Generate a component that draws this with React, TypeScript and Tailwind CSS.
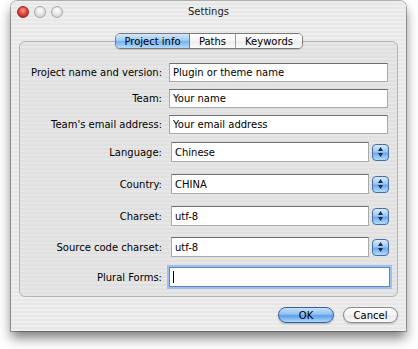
const pinstripe =
  "bg-[repeating-linear-gradient(180deg,#eeeeee_0px,#eeeeee_2px,#e7e7e7_2px,#e7e7e7_4px)]";

function Light({ red }: { red?: boolean }) {
  return (
    <div
      className={
        red
          ? "w-[12px] h-[12px] rounded-full border border-[#8a2a2a] bg-[radial-gradient(circle_at_50%_35%,#ff9a8a_0%,#e4483a_45%,#a81c14_100%)]"
          : "w-[12px] h-[12px] rounded-full border border-[#a8a8a8] bg-[radial-gradient(circle_at_50%_35%,#ffffff_0%,#e6e6e6_50%,#c4c4c4_100%)]"
      }
    />
  );
}

function Row({
  label,
  className,
  children,
}: {
  label: string;
  className: string;
  children: React.ReactNode;
}) {
  return (
    <div className={"grid grid-cols-[142px_1fr] gap-x-[7px] items-center " + className}>
      <div className="text-right whitespace-nowrap">{label}</div>
      {children}
    </div>
  );
}

function TextField({ value }: { value: string }) {
  return (
    <div className="h-[19px] bg-white border border-[#a9a9a9] border-t-[#6e6e6e] pl-[3px] flex items-center whitespace-nowrap">
      {value}
    </div>
  );
}

function Combo({ value }: { value: string }) {
  return (
    <div className="flex items-center pl-[2px]">
      <div className="w-[198px] h-[20px] bg-white border border-[#a9a9a9] border-t-[#6e6e6e] pl-[3px] flex items-center">
        {value}
      </div>
      <div className="ml-[3px] w-[17px] h-[17px] rounded-[4px] border border-[#4b6d9e] bg-[linear-gradient(180deg,#d9eafc_0%,#9cc8f3_45%,#6aa8ea_55%,#b5dafc_100%)] flex flex-col items-center justify-center gap-[2px]">
        <svg width="5" height="4" viewBox="0 0 5 4">
          <path d="M2.5 0 L5 4 L0 4 Z" fill="#1d2c44" />
        </svg>
        <svg width="5" height="4" viewBox="0 0 5 4">
          <path d="M0 0 L5 0 L2.5 4 Z" fill="#1d2c44" />
        </svg>
      </div>
    </div>
  );
}

export default function App() {
  return (
    <div className="w-[418px] h-[349px] bg-white pl-[11px] pt-[1px] font-['DejaVu_Sans',sans-serif] text-[10px] text-black">
      <div
        className={
          "w-[395px] h-[330px] rounded-t-[6px] flex flex-col shadow-[0_0_0_1px_rgba(0,0,0,0.28),0_7px_12px_rgba(0,0,0,0.5)] " +
          pinstripe
        }
      >
        {/* Title bar */}
        <div className="h-[21px] relative flex items-center pl-[6px]">
          <div className="flex gap-[5px]">
            <Light red />
            <Light />
            <Light />
          </div>
          <div className="absolute inset-0 flex items-center justify-center text-[#222]">
            Settings
          </div>
        </div>

        <div className="flex-1 px-[8px] pt-[11px] flex flex-col">
          {/* Tabs */}
          <div className="relative z-10 flex justify-center pl-[1px]">
            <div className="flex h-[16px] rounded-[5px] border border-[#7b7b7b] overflow-hidden text-[10px] shadow-[0_1px_1px_rgba(0,0,0,0.15)]">
              <div className="w-[74px] flex items-center justify-center bg-[linear-gradient(180deg,#d3e6fb_0%,#a3cbf4_45%,#79b2ee_55%,#b7dcfd_100%)] border-r border-[#6c7f9a]">
                Project info
              </div>
              <div className="w-[46px] flex items-center justify-center bg-[linear-gradient(180deg,#ffffff_0%,#f6f6f6_50%,#ececec_55%,#fbfbfb_100%)] border-r border-[#a0a0a0]">
                Paths
              </div>
              <div className="w-[66px] flex items-center justify-center bg-[linear-gradient(180deg,#ffffff_0%,#f6f6f6_50%,#ececec_55%,#fbfbfb_100%)]">
                Keywords
              </div>
            </div>
          </div>

          {/* Group box */}
          <div className="-mt-[8px] h-[256px] rounded-[6px] border border-[#b3b3b3] bg-[repeating-linear-gradient(180deg,#e6e6e6_0px,#e6e6e6_2px,#e0e0e0_2px,#e0e0e0_4px)] pr-[9px] pt-[21px] flex flex-col">
            <Row label="Project name and version:" className="">
              <TextField value="Plugin or theme name" />
            </Row>
            <Row label="Team:" className="mt-[7px]">
              <TextField value="Your name" />
            </Row>
            <Row label="Team's email address:" className="mt-[7px]">
              <TextField value="Your email address" />
            </Row>
            <Row label="Language:" className="mt-[8px]">
              <Combo value="Chinese" />
            </Row>
            <Row label="Country:" className="mt-[12px]">
              <Combo value="CHINA" />
            </Row>
            <Row label="Charset:" className="mt-[12px]">
              <Combo value="utf-8" />
            </Row>
            <Row label="Source code charset:" className="mt-[11px]">
              <Combo value="utf-8" />
            </Row>
            <Row label="Plural Forms:" className="mt-[10px]">
              <div className="h-[20px] mr-[-2px] bg-white border border-[#5f86c0] shadow-[0_0_0_2px_#9fc0e8] pl-[3px] flex items-center">
                <div className="w-px h-[12px] bg-black" />
              </div>
            </Row>
          </div>

          {/* Buttons */}
          <div className="flex justify-end gap-[9px] mt-[10px]">
            <button className="w-[56px] h-[16px] rounded-full border border-[#3d5f92] bg-[linear-gradient(180deg,#c9e1fb_0%,#8fc0f2_45%,#5c9ee8_55%,#a9d6fd_100%)] flex items-center justify-center text-[10px] shadow-[0_1px_2px_rgba(0,0,0,0.25)]">
              OK
            </button>
            <button className="w-[55px] h-[16px] rounded-full border border-[#8a8a8a] bg-[linear-gradient(180deg,#ffffff_0%,#f5f5f5_50%,#e8e8e8_55%,#fafafa_100%)] flex items-center justify-center text-[10px] shadow-[0_1px_2px_rgba(0,0,0,0.2)]">
              Cancel
            </button>
          </div>
        </div>
      </div>
    </div>
  );
}
